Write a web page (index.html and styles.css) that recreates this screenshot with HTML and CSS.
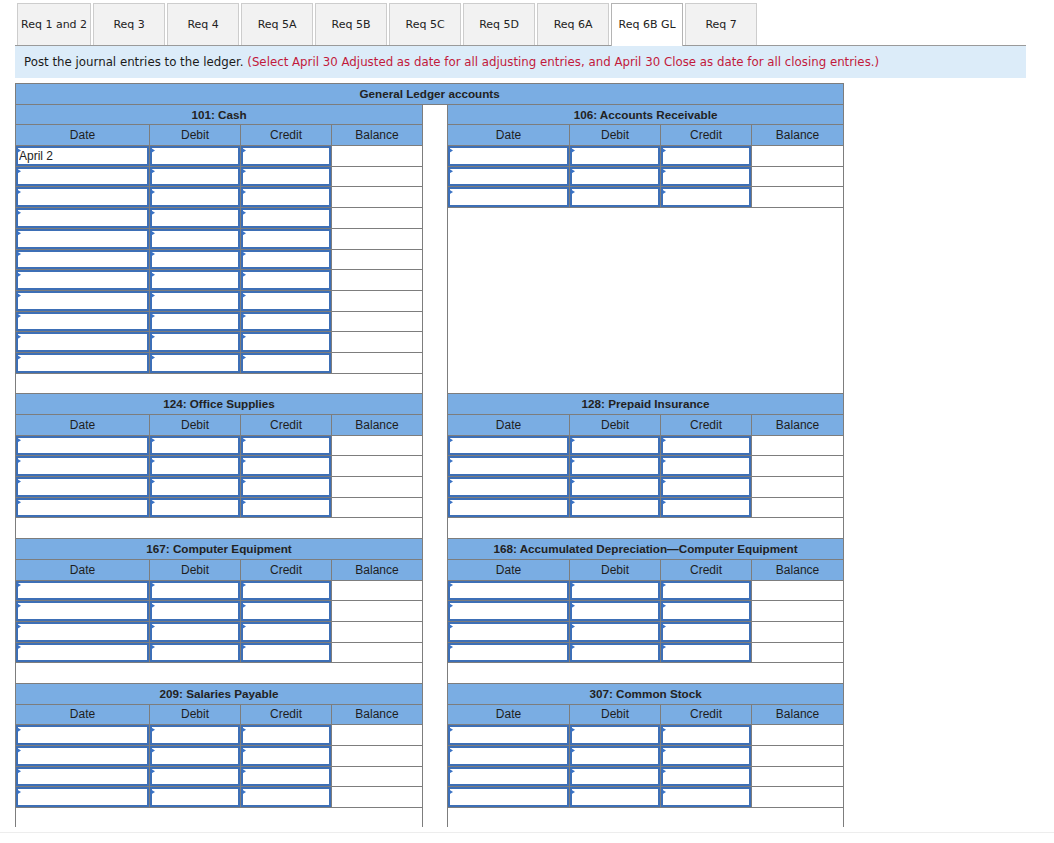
FILE: index.html
```html
<!DOCTYPE html>
<html>
<head>
<meta charset="utf-8">
<title>Req 6B GL</title>
<link rel="stylesheet" href="styles.css">
</head>
<body>
<div class="page">
  <div class="tabs">
    <div class="tab">Req 1 and 2</div>
    <div class="tab">Req 3</div>
    <div class="tab">Req 4</div>
    <div class="tab">Req 5A</div>
    <div class="tab">Req 5B</div>
    <div class="tab">Req 5C</div>
    <div class="tab">Req 5D</div>
    <div class="tab">Req 6A</div>
    <div class="tab active">Req 6B GL</div>
    <div class="tab">Req 7</div>
  </div>
  <div class="instructions">Post the journal entries to the ledger.&nbsp;<span class="red">(Select April 30 Adjusted as date for all adjusting entries, and April 30 Close as date for all closing entries.)</span></div>

  <table class="gl">
    <colgroup>
      <col class="c-date-l"><col class="c-amt"><col class="c-amt"><col class="c-amt">
      <col class="c-gap">
      <col class="c-date-r"><col class="c-amt"><col class="c-amt"><col class="c-bal-r">
    </colgroup>
    <tr class="title"><th colspan="9">General Ledger accounts</th></tr>

    <!-- Section 1 -->
    <tr class="acct"><th colspan="4">101: Cash</th><td class="gap" rowspan="35"></td><th colspan="4">106: Accounts Receivable</th></tr>
    <tr><th>Date</th><th>Debit</th><th>Credit</th><th>Balance</th><th>Date</th><th>Debit</th><th>Credit</th><th>Balance</th></tr>
    <tr><td class="in"><span class="fld"><i class="flag"></i><input type="text" value="April 2"></span></td><td class="in"><span class="fld"><i class="flag"></i><input type="text"></span></td><td class="in"><span class="fld"><i class="flag"></i><input type="text"></span></td><td></td><td class="in"><span class="fld"><i class="flag"></i><input type="text"></span></td><td class="in"><span class="fld"><i class="flag"></i><input type="text"></span></td><td class="in"><span class="fld"><i class="flag"></i><input type="text"></span></td><td></td></tr>
    <tr><td class="in"><span class="fld"><i class="flag"></i><input type="text"></span></td><td class="in"><span class="fld"><i class="flag"></i><input type="text"></span></td><td class="in"><span class="fld"><i class="flag"></i><input type="text"></span></td><td></td><td class="in"><span class="fld"><i class="flag"></i><input type="text"></span></td><td class="in"><span class="fld"><i class="flag"></i><input type="text"></span></td><td class="in"><span class="fld"><i class="flag"></i><input type="text"></span></td><td></td></tr>
    <tr><td class="in"><span class="fld"><i class="flag"></i><input type="text"></span></td><td class="in"><span class="fld"><i class="flag"></i><input type="text"></span></td><td class="in"><span class="fld"><i class="flag"></i><input type="text"></span></td><td></td><td class="in"><span class="fld"><i class="flag"></i><input type="text"></span></td><td class="in"><span class="fld"><i class="flag"></i><input type="text"></span></td><td class="in"><span class="fld"><i class="flag"></i><input type="text"></span></td><td></td></tr>
    <tr><td class="in"><span class="fld"><i class="flag"></i><input type="text"></span></td><td class="in"><span class="fld"><i class="flag"></i><input type="text"></span></td><td class="in"><span class="fld"><i class="flag"></i><input type="text"></span></td><td></td><td colspan="4" rowspan="9"></td></tr>
    <tr><td class="in"><span class="fld"><i class="flag"></i><input type="text"></span></td><td class="in"><span class="fld"><i class="flag"></i><input type="text"></span></td><td class="in"><span class="fld"><i class="flag"></i><input type="text"></span></td><td></td></tr>
    <tr><td class="in"><span class="fld"><i class="flag"></i><input type="text"></span></td><td class="in"><span class="fld"><i class="flag"></i><input type="text"></span></td><td class="in"><span class="fld"><i class="flag"></i><input type="text"></span></td><td></td></tr>
    <tr><td class="in"><span class="fld"><i class="flag"></i><input type="text"></span></td><td class="in"><span class="fld"><i class="flag"></i><input type="text"></span></td><td class="in"><span class="fld"><i class="flag"></i><input type="text"></span></td><td></td></tr>
    <tr><td class="in"><span class="fld"><i class="flag"></i><input type="text"></span></td><td class="in"><span class="fld"><i class="flag"></i><input type="text"></span></td><td class="in"><span class="fld"><i class="flag"></i><input type="text"></span></td><td></td></tr>
    <tr><td class="in"><span class="fld"><i class="flag"></i><input type="text"></span></td><td class="in"><span class="fld"><i class="flag"></i><input type="text"></span></td><td class="in"><span class="fld"><i class="flag"></i><input type="text"></span></td><td></td></tr>
    <tr><td class="in"><span class="fld"><i class="flag"></i><input type="text"></span></td><td class="in"><span class="fld"><i class="flag"></i><input type="text"></span></td><td class="in"><span class="fld"><i class="flag"></i><input type="text"></span></td><td></td></tr>
    <tr><td class="in"><span class="fld"><i class="flag"></i><input type="text"></span></td><td class="in"><span class="fld"><i class="flag"></i><input type="text"></span></td><td class="in"><span class="fld"><i class="flag"></i><input type="text"></span></td><td></td></tr>
    <tr><td colspan="4"></td></tr>

    <!-- Section 2 -->
    <tr class="acct"><th colspan="4">124: Office Supplies</th><th colspan="4">128: Prepaid Insurance</th></tr>
    <tr><th>Date</th><th>Debit</th><th>Credit</th><th>Balance</th><th>Date</th><th>Debit</th><th>Credit</th><th>Balance</th></tr>
    <tr><td class="in"><span class="fld"><i class="flag"></i><input type="text"></span></td><td class="in"><span class="fld"><i class="flag"></i><input type="text"></span></td><td class="in"><span class="fld"><i class="flag"></i><input type="text"></span></td><td></td><td class="in"><span class="fld"><i class="flag"></i><input type="text"></span></td><td class="in"><span class="fld"><i class="flag"></i><input type="text"></span></td><td class="in"><span class="fld"><i class="flag"></i><input type="text"></span></td><td></td></tr>
    <tr><td class="in"><span class="fld"><i class="flag"></i><input type="text"></span></td><td class="in"><span class="fld"><i class="flag"></i><input type="text"></span></td><td class="in"><span class="fld"><i class="flag"></i><input type="text"></span></td><td></td><td class="in"><span class="fld"><i class="flag"></i><input type="text"></span></td><td class="in"><span class="fld"><i class="flag"></i><input type="text"></span></td><td class="in"><span class="fld"><i class="flag"></i><input type="text"></span></td><td></td></tr>
    <tr><td class="in"><span class="fld"><i class="flag"></i><input type="text"></span></td><td class="in"><span class="fld"><i class="flag"></i><input type="text"></span></td><td class="in"><span class="fld"><i class="flag"></i><input type="text"></span></td><td></td><td class="in"><span class="fld"><i class="flag"></i><input type="text"></span></td><td class="in"><span class="fld"><i class="flag"></i><input type="text"></span></td><td class="in"><span class="fld"><i class="flag"></i><input type="text"></span></td><td></td></tr>
    <tr><td class="in"><span class="fld"><i class="flag"></i><input type="text"></span></td><td class="in"><span class="fld"><i class="flag"></i><input type="text"></span></td><td class="in"><span class="fld"><i class="flag"></i><input type="text"></span></td><td></td><td class="in"><span class="fld"><i class="flag"></i><input type="text"></span></td><td class="in"><span class="fld"><i class="flag"></i><input type="text"></span></td><td class="in"><span class="fld"><i class="flag"></i><input type="text"></span></td><td></td></tr>
    <tr><td colspan="4"></td><td colspan="4"></td></tr>

    <!-- Section 3 -->
    <tr class="acct"><th colspan="4">167: Computer Equipment</th><th colspan="4">168: Accumulated Depreciation—Computer Equipment</th></tr>
    <tr><th>Date</th><th>Debit</th><th>Credit</th><th>Balance</th><th>Date</th><th>Debit</th><th>Credit</th><th>Balance</th></tr>
    <tr><td class="in"><span class="fld"><i class="flag"></i><input type="text"></span></td><td class="in"><span class="fld"><i class="flag"></i><input type="text"></span></td><td class="in"><span class="fld"><i class="flag"></i><input type="text"></span></td><td></td><td class="in"><span class="fld"><i class="flag"></i><input type="text"></span></td><td class="in"><span class="fld"><i class="flag"></i><input type="text"></span></td><td class="in"><span class="fld"><i class="flag"></i><input type="text"></span></td><td></td></tr>
    <tr><td class="in"><span class="fld"><i class="flag"></i><input type="text"></span></td><td class="in"><span class="fld"><i class="flag"></i><input type="text"></span></td><td class="in"><span class="fld"><i class="flag"></i><input type="text"></span></td><td></td><td class="in"><span class="fld"><i class="flag"></i><input type="text"></span></td><td class="in"><span class="fld"><i class="flag"></i><input type="text"></span></td><td class="in"><span class="fld"><i class="flag"></i><input type="text"></span></td><td></td></tr>
    <tr><td class="in"><span class="fld"><i class="flag"></i><input type="text"></span></td><td class="in"><span class="fld"><i class="flag"></i><input type="text"></span></td><td class="in"><span class="fld"><i class="flag"></i><input type="text"></span></td><td></td><td class="in"><span class="fld"><i class="flag"></i><input type="text"></span></td><td class="in"><span class="fld"><i class="flag"></i><input type="text"></span></td><td class="in"><span class="fld"><i class="flag"></i><input type="text"></span></td><td></td></tr>
    <tr><td class="in"><span class="fld"><i class="flag"></i><input type="text"></span></td><td class="in"><span class="fld"><i class="flag"></i><input type="text"></span></td><td class="in"><span class="fld"><i class="flag"></i><input type="text"></span></td><td></td><td class="in"><span class="fld"><i class="flag"></i><input type="text"></span></td><td class="in"><span class="fld"><i class="flag"></i><input type="text"></span></td><td class="in"><span class="fld"><i class="flag"></i><input type="text"></span></td><td></td></tr>
    <tr><td colspan="4"></td><td colspan="4"></td></tr>

    <!-- Section 4 -->
    <tr class="acct"><th colspan="4">209: Salaries Payable</th><th colspan="4">307: Common Stock</th></tr>
    <tr><th>Date</th><th>Debit</th><th>Credit</th><th>Balance</th><th>Date</th><th>Debit</th><th>Credit</th><th>Balance</th></tr>
    <tr><td class="in"><span class="fld"><i class="flag"></i><input type="text"></span></td><td class="in"><span class="fld"><i class="flag"></i><input type="text"></span></td><td class="in"><span class="fld"><i class="flag"></i><input type="text"></span></td><td></td><td class="in"><span class="fld"><i class="flag"></i><input type="text"></span></td><td class="in"><span class="fld"><i class="flag"></i><input type="text"></span></td><td class="in"><span class="fld"><i class="flag"></i><input type="text"></span></td><td></td></tr>
    <tr><td class="in"><span class="fld"><i class="flag"></i><input type="text"></span></td><td class="in"><span class="fld"><i class="flag"></i><input type="text"></span></td><td class="in"><span class="fld"><i class="flag"></i><input type="text"></span></td><td></td><td class="in"><span class="fld"><i class="flag"></i><input type="text"></span></td><td class="in"><span class="fld"><i class="flag"></i><input type="text"></span></td><td class="in"><span class="fld"><i class="flag"></i><input type="text"></span></td><td></td></tr>
    <tr><td class="in"><span class="fld"><i class="flag"></i><input type="text"></span></td><td class="in"><span class="fld"><i class="flag"></i><input type="text"></span></td><td class="in"><span class="fld"><i class="flag"></i><input type="text"></span></td><td></td><td class="in"><span class="fld"><i class="flag"></i><input type="text"></span></td><td class="in"><span class="fld"><i class="flag"></i><input type="text"></span></td><td class="in"><span class="fld"><i class="flag"></i><input type="text"></span></td><td></td></tr>
    <tr><td class="in"><span class="fld"><i class="flag"></i><input type="text"></span></td><td class="in"><span class="fld"><i class="flag"></i><input type="text"></span></td><td class="in"><span class="fld"><i class="flag"></i><input type="text"></span></td><td></td><td class="in"><span class="fld"><i class="flag"></i><input type="text"></span></td><td class="in"><span class="fld"><i class="flag"></i><input type="text"></span></td><td class="in"><span class="fld"><i class="flag"></i><input type="text"></span></td><td></td></tr>
    <tr><td colspan="4"></td><td colspan="4"></td></tr>
  </table>
</div>
<div class="footer"></div>
</body>
</html>
```

FILE: styles.css
```css
* { box-sizing: border-box; }

html, body {
  margin: 0;
  padding: 0;
  background: #fff;
  overflow: hidden;
}

body {
  font-family: "Liberation Sans", Arial, sans-serif;
  color: #1c1c1c;
}

.page {
  padding-left: 15px;
  width: 1026px;
}

/* Tabs */
.tabs {
  display: flex;
  gap: 2px;
  padding: 3px 0 0 2px;
  height: 46px;
  border-bottom: 1px solid #9a9a9a;
}

.tab {
  height: 42px;
  min-width: 72px;
  padding: 0 3px 1px;
  border: 1px solid #cdcdcd;
  border-bottom: none;
  background: #f2f2f2;
  font-family: "DejaVu Sans", Verdana, sans-serif;
  font-size: 11px;
  color: #222;
  display: flex;
  align-items: center;
  justify-content: center;
  white-space: nowrap;
}

.tab.active {
  background: #fff;
  border-color: #b4b4b4;
  height: 43px;
  padding-bottom: 2px;
  position: relative;
}

/* Instruction bar */
.instructions {
  height: 32px;
  background: #dcecf9;
  padding-left: 9px;
  display: flex;
  align-items: center;
  font-family: "DejaVu Sans", Verdana, sans-serif;
  font-size: 11.8px;
  color: #1a1a1a;
  white-space: nowrap;
  margin-bottom: 5px;
}

.red { color: #c21a3c; }

/* General ledger table */
.gl {
  border-collapse: collapse;
  table-layout: fixed;
  width: 828px;
  font-size: 12px;
}

.c-date-l { width: 134px; }
.c-amt { width: 91px; }
.c-gap { width: 25px; }
.c-date-r { width: 122px; }
.c-bal-r { width: 92px; }

.gl tr { height: 20.7px; }

.gl th,
.gl td {
  border: 1px solid #7d7d7d;
  padding: 0;
  height: 20.7px;
  background: #fff;
}

.gl th {
  background: #7aade3;
  font-weight: normal;
  color: #1e1e1e;
  text-align: center;
  white-space: nowrap;
  line-height: 14px;
}

.gl .title th,
.gl .acct th {
  font-weight: bold;
  font-size: 11.7px;
  color: #222;
}

.fld {
  display: block;
  position: relative;
}

.flag {
  position: absolute;
  z-index: 2;
  left: 1px;
  top: 2px;
  width: 4px;
  height: 5px;
  background: #3a72c4;
  clip-path: polygon(0 0, 100% 50%, 0 100%);
}

.fld input {
  display: block;
  width: 100%;
  height: 19.7px;
  margin: 0;
  padding: 0 1px;
  border: 2px solid #3d6fb6;
  border-radius: 0;
  background: #fff;
  font-family: "Liberation Sans", Arial, sans-serif;
  font-size: 12px;
  color: #222;
  outline: none;
}

.footer {
  position: fixed;
  left: 0;
  right: 0;
  top: 827px;
  bottom: 0;
  background: linear-gradient(#fff 5px, #ededed 5px, #ededed 6px, #fff 6px);
}
```
